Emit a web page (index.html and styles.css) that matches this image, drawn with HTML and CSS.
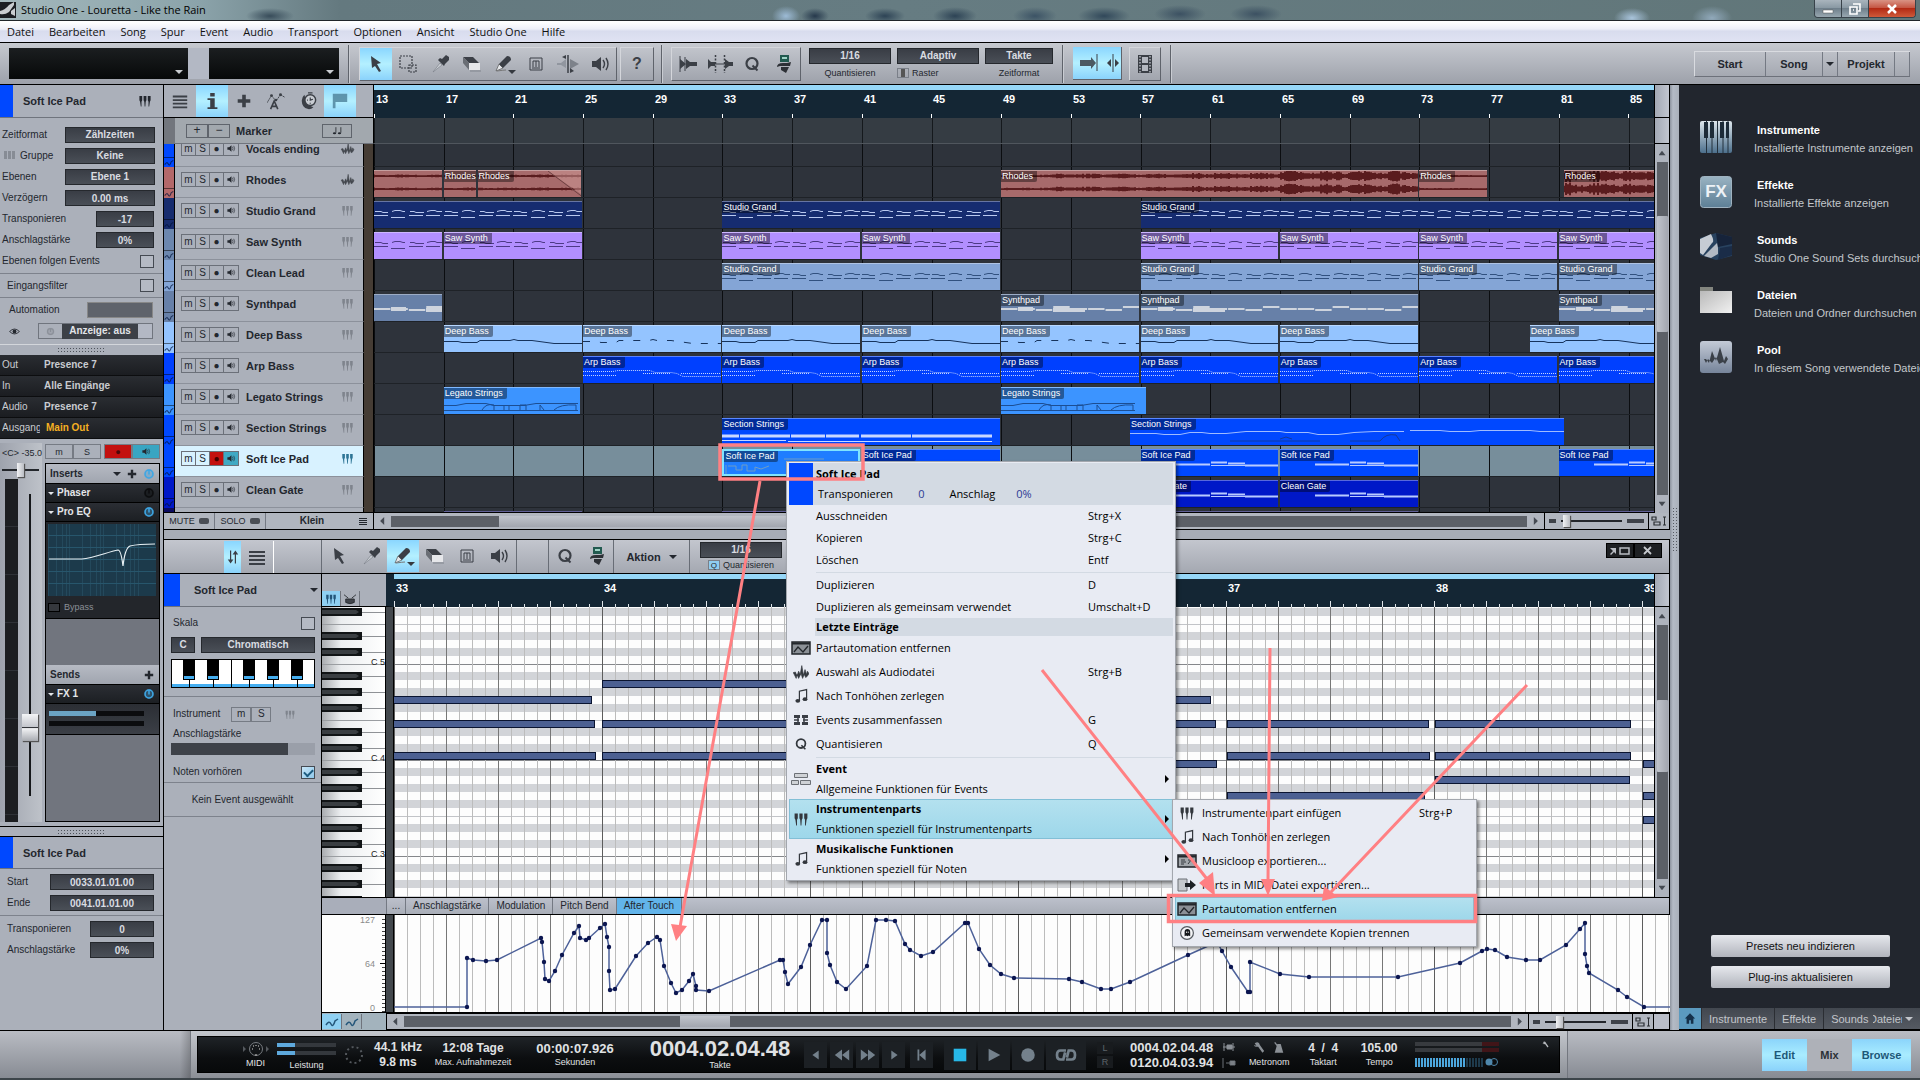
FILE: index.html
```
<!DOCTYPE html>
<html lang="de">
<head>
    <meta charset="UTF-8">
    <meta name="viewport" content="width=device-width, initial-scale=1.0">
    <title>Studio One - Louretta - Like the Rain</title>
    <link rel="stylesheet" href="styles.css">
</head>
<body>
    <!-- Icon library -->
    <svg class="icon-defs" width="0" height="0" aria-hidden="true">
        <symbol id="i-arrow" viewBox="0 0 20 20"><path d="M5 2l1 12 3-2 4 6 2-1-4-7 4-1z" fill="currentColor"/></symbol>
        <symbol id="i-range" viewBox="0 0 20 20"><path d="M2 2h12v12H2zM11 11h7v7h-7z" fill="none" stroke="currentColor" stroke-width="1.2" stroke-dasharray="2 1"/></symbol>
        <symbol id="i-dropper" viewBox="0 0 20 20"><path d="M3 18l7-9 2 2z" fill="#c8ccd2" stroke="#777c84" stroke-width=".6"/><path d="M8 6l6 6 1-2 4-4V3l-3-2-4 4-2-1z" fill="currentColor"/></symbol>
        <symbol id="i-eraser" viewBox="0 0 20 20"><path d="M1 3h10l6 6H7z" fill="#3c4047"/><path d="M7 9h11v7H7z" fill="#e6e7ea"/><path d="M1 3l6 6v7L1 9z" fill="#6a6e75"/><path d="M8 17h11" stroke="#80858d"/></symbol>
        <symbol id="i-pencil" viewBox="0 0 20 20"><path d="M2 17l3-7 4 4z" fill="#e5e7ea" stroke="#555" stroke-width=".7"/><path d="M5 10l8-8q4 0 4 4l-8 8z" fill="currentColor"/><path d="M3 17q7-1 9-1" stroke="#777" fill="none"/></symbol>
        <symbol id="i-mute" viewBox="0 0 20 20"><path d="M4 4h12v12H4z" fill="none" stroke="currentColor"/><path d="M7 13V7h6v6M10 7v6M6 14h8" fill="none" stroke="currentColor"/></symbol>
        <symbol id="i-split" viewBox="0 0 24 20"><path d="M1 9h4l5-4v9L5 11H1z" fill="#91969f"/><path d="M14 5v10l9-5z" fill="#7d828a"/><path d="M12 1v18" stroke="currentColor" stroke-width="1.5"/><path d="M10 1v4L6 3zM14 14v5l4-2z" fill="currentColor"/></symbol>
        <symbol id="i-speaker" viewBox="0 0 20 20"><path d="M2 7h4l5-4v14l-5-4H2z" fill="currentColor"/><path d="M13 6q3 4 0 8M16 4q4 6 0 12" fill="none" stroke="currentColor" stroke-width="1.400"/></symbol>
        <symbol id="i-strip" viewBox="0 0 20 20"><path d="M2 2v16M7 3v14" stroke="currentColor"/><path d="M2 5l6 5-6 5zM8 5l4 3h7v4h-7l-4 3z" fill="currentColor"/></symbol>
        <symbol id="i-bounce" viewBox="0 0 28 20"><path d="M2 5l3 3h4v4H5l-3 3zM19 5v10l4-3h4V8h-4z" fill="currentColor"/><path d="M9 10h10" stroke="currentColor"/><path d="M9.500 1v18M18.500 1v18" stroke="currentColor" stroke-width="1.500" stroke-dasharray="2 1.500"/></symbol>
        <symbol id="i-q" viewBox="0 0 20 20"><circle cx="10" cy="9.500" r="5.500" fill="none" stroke="currentColor" stroke-width="2.200"/><path d="M10.500 11.500l5 5" stroke="currentColor" stroke-width="2"/></symbol>
        <symbol id="i-macro" viewBox="0 0 20 20"><path d="M6 1h9v7H6z" fill="#225a50"/><path d="M8 3h5v2H8z" fill="#9fd3c6"/><path d="M3 13q0-4 6-4h4l4-1-1 4H6zM7 13h8l-3 6-5-3z" fill="#2d3036"/></symbol>
        <symbol id="i-autoscroll" viewBox="0 0 20 20"><path d="M1 7h11V4l5 6-5 6v-3H1z" fill="currentColor" opacity=".85"/><path d="M18 1v17" stroke="currentColor"/></symbol>
        <symbol id="i-center" viewBox="0 0 20 20"><path d="M10 1v18" stroke="currentColor"/><path d="M8 6v8l-4-4zM12 6v8l4-4z" fill="currentColor"/></symbol>
        <symbol id="i-film" viewBox="0 0 20 20"><path d="M3 1h14v18H3z" fill="currentColor"/><path d="M7 3h6v6H7zM7 11h6v6H7z" fill="#b4b8c0"/><path d="M5 2v17M15 2v17" stroke="#b4b8c0" stroke-width="1.500" stroke-dasharray="1.500 1.500"/></symbol>
        <symbol id="i-list" viewBox="0 0 20 20"><path d="M2 5h16M2 9h16M2 13h16M2 17h16" stroke="currentColor" stroke-width="2"/></symbol>
        <symbol id="i-info" viewBox="0 0 20 20"><path d="M8 1h5v4H8zM5 7h8v10h3v2H5v-2h3V9H5z" fill="currentColor"/></symbol>
        <symbol id="i-plus" viewBox="0 0 20 20"><path d="M8 3h4v5h5v4h-5v5H8v-5H3V8h5z" fill="currentColor"/></symbol>
        <symbol id="i-auto" viewBox="0 0 20 20"><path d="M0 12l5-8 5 6 5-7 5 3" fill="none" stroke="currentColor" stroke-dasharray="2 .6"/><path d="M4 19l4-9 4 9M6 16h4" fill="none" stroke="currentColor" stroke-width="1.800"/><circle cx="5" cy="4" r="1.600" fill="currentColor"/><circle cx="10" cy="9" r="1.400" fill="currentColor"/><circle cx="15" cy="3" r="1.600" fill="currentColor"/></symbol>
        <symbol id="i-clock" viewBox="0 0 20 20"><path d="M6 3a7 8 0 1 0 10 14L9 14z" fill="currentColor"/><circle cx="12.500" cy="9" r="6" fill="#c8ccd2" stroke="currentColor" stroke-width="1.600"/><path d="M12.500 6v3l3-1M10 1h5M9 9h1M12.500 12v1" stroke="currentColor" fill="none" stroke-width="1.300"/></symbol>
        <symbol id="i-flag" viewBox="0 0 20 20"><path d="M2 2h16v9H5v7H2z" fill="currentColor" opacity=".8"/></symbol>
        <symbol id="i-keys" viewBox="0 0 20 20"><path d="M2 3h4v6l-1 2v7H4l-1-7-1-2zM8 3h4v6l-1 2-.5 7h-1L9 11 8 9zM14 3h4v6l-1 2-1 7h-1v-7l-1-2z" fill="currentColor"/></symbol>
        <symbol id="i-wave" viewBox="0 0 20 20"><path d="M0 11l3-1 2 5 2-6 2 4 2-11 2 12 2-7 2 6 1-4 2 3-2 3-2 2-2-4-2 5-2-6-3 6-2-5-1 5-3-6z" fill="currentColor" stroke="currentColor" stroke-width=".8"/></symbol>
        <symbol id="i-notes" viewBox="0 0 20 20"><path d="M8 16V4l9-2v11" fill="none" stroke="currentColor" stroke-width="1.500"/><ellipse cx="6" cy="16" rx="3" ry="2.300" fill="currentColor"/><ellipse cx="15" cy="14" rx="3" ry="2.300" fill="currentColor"/></symbol>
        <symbol id="i-quarters" viewBox="0 0 20 20"><path d="M8 4v10M17 4v10" stroke="currentColor" stroke-width="1.500"/><ellipse cx="5.500" cy="15" rx="3" ry="2" fill="currentColor"/><ellipse cx="14.500" cy="15" rx="3" ry="2" fill="currentColor"/></symbol>
        <symbol id="i-power" viewBox="0 0 20 20"><circle cx="10" cy="10" r="8.500" fill="currentColor" opacity=".35"/><circle cx="10" cy="10" r="6.500" fill="none" stroke="currentColor" stroke-width="2.500"/><path d="M10 3v8" stroke="currentColor" stroke-width="2.500"/></symbol>
        <symbol id="i-part" viewBox="0 0 20 14"><path d="M1 1h18v12H1z" fill="#8b9096" stroke="#22262b" stroke-width="1.500"/><path d="M1 2.500h18" stroke="#22262b" stroke-width="2"/><path d="M3 11l4-5 5 5 5-6" fill="none" stroke="#22262b" stroke-width="1.300"/></symbol>
        <symbol id="i-loop" viewBox="0 0 20 14"><path d="M1 1h18v12H1z" fill="#a2a6ab" stroke="#22262b" stroke-width="1.500"/><path d="M1 2.500h18" stroke="#22262b" stroke-width="2"/><path d="M4 6h4M4 8h5M4 10h3M11 10l3-4 3 4M11 6h3" stroke="#33373c" fill="none"/></symbol>
        <symbol id="i-export" viewBox="0 0 20 14"><path d="M1 1h9v12H1z" fill="#c5c8cc" stroke="#6c7076"/><path d="M8 5h5V2l6 5-6 5V9H8z" fill="#1d2024"/></symbol>
        <symbol id="i-ghost" viewBox="0 0 20 20"><circle cx="10" cy="10" r="8" fill="#f4f5f8" stroke="#555a60" stroke-width="1.500"/><path d="M7 14V9q0-4 3.500-4T14 9v5l-2-1-1.500 1L9 13z" fill="#15181c"/><path d="M9 8h1v2H9zM11 8h1v2h-1z" fill="#fff"/></symbol>
        <symbol id="i-merge" viewBox="0 0 20 14"><path d="M3 2h6v3H3zM3 9h6v3H3zM11 2h6v3h-6zM11 9h6v3h-6z" fill="#3a3e45"/><path d="M7 3v8M13 3v8M3 7h5M12 7h5" stroke="#3a3e45" stroke-width="1.500"/></symbol>
        <symbol id="i-blocks" viewBox="0 0 20 14"><path d="M3.500 1.500h13v4h-13zM.5 8.500h7v4h-7zM9.500 8.500h10v4h-10z" fill="#cfd2d6" stroke="#6c7076"/></symbol>
        <symbol id="i-eye" viewBox="0 0 20 12"><path d="M1 6q9-9 18 0-9 9-18 0z" fill="none" stroke="currentColor" stroke-width="1.500"/><circle cx="10" cy="6" r="3.500" fill="currentColor"/></symbol>
        <symbol id="i-swap" viewBox="0 0 16 20"><path d="M5 2v13M11 5v13" stroke="currentColor" stroke-width="1.500"/><path d="M1.500 13h7L5 18zM7.500 7h7L11 2z" fill="currentColor"/></symbol>
        <symbol id="i-zoomfit" viewBox="0 0 16 10"><path d="M1 1h4v3H1zM3 6h6v3H3z" fill="none" stroke="#2a2e33" stroke-width="1.200"/><path d="M13.500 1v8M12 1h3M12 9h3" stroke="#2a2e33"/></symbol>
        <symbol id="i-curve" viewBox="0 0 14 12"><path d="M1 9q3-5 5-1t4-3l3-2" fill="none" stroke="currentColor" stroke-width="1.500"/></symbol>
        <symbol id="i-wrench" viewBox="0 0 14 14"><path d="M2 2q5-3 6 2l5 7-2 2-5-7Q2 7 1 4l3 1z" fill="currentColor"/></symbol>
        <symbol id="i-metro" viewBox="0 0 14 14"><path d="M5 3h4l3 10H2z" fill="currentColor"/><path d="M2 1l7 9" stroke="currentColor" stroke-width="1.500"/></symbol>
        <symbol id="i-home" viewBox="0 0 14 14"><path d="M7 1l6 6h-2v6H8V9H6v4H3V7H1z" fill="currentColor"/></symbol>
    </svg>

    <header class="titlebar">
        <svg class="app-icon" viewBox="0 0 16 16"><path d="M0 0h16v16H0z" fill="#1b1e22"/><path d="M0 9q5-1 9-6l5-3v3L9 10q-4 3-9 2zM11 9l4-3v8l-4-2z" fill="#c9cdd0"/></svg>
        <h1 class="app-title">Studio One - Louretta - Like the Rain</h1>
        <div class="window-buttons">
            <button class="win-btn" aria-label="Minimieren"><svg width="12" height="10"><path d="M1 6h10v3H1z" fill="#fff" stroke="#555" stroke-width=".5"/></svg></button>
            <button class="win-btn" aria-label="Wiederherstellen"><svg width="12" height="12"><path d="M4 1h7v7H9M1 4h7v7H1zM4 7h1" fill="none" stroke="#fff" stroke-width="1.600"/></svg></button>
            <button class="win-btn close" aria-label="Schließen"><svg width="12" height="10"><path d="M2 1l8 8M10 1L2 9" stroke="#fff" stroke-width="2.500"/></svg></button>
        </div>
    </header>

    <nav class="menubar">
        <button>Datei</button><button>Bearbeiten</button><button>Song</button><button>Spur</button><button>Event</button><button>Audio</button><button>Transport</button><button>Optionen</button><button>Ansicht</button><button>Studio One</button><button>Hilfe</button>
    </nav>

    <!-- Main toolbar -->
    <div class="toolbar">
        <div class="param-display wide"></div>
        <div class="param-link"></div>
        <div class="param-display"></div>
        <div class="tool-sep"></div>
        <div class="tool-group">
            <button class="tool on" aria-label="Pfeil"><svg><use href="#i-arrow"/></svg></button>
            <button class="tool" aria-label="Bereich"><svg><use href="#i-range"/></svg></button>
            <button class="tool" aria-label="Teilen"><svg><use href="#i-dropper"/></svg></button>
            <button class="tool" aria-label="Radierer"><svg><use href="#i-eraser"/></svg></button>
            <button class="tool more" aria-label="Stift"><svg><use href="#i-pencil"/></svg></button>
            <button class="tool" aria-label="Stumm"><svg><use href="#i-mute"/></svg></button>
            <button class="tool" aria-label="Biegen"><svg class="w24"><use href="#i-split"/></svg></button>
            <button class="tool" aria-label="Hören"><svg><use href="#i-speaker"/></svg></button>
        </div>
        <div class="tool-group help"><button class="tool">?</button></div>
        <div class="tool-sep"></div>
        <div class="tool-group actions">
            <button class="tool" aria-label="Strip Silence"><svg><use href="#i-strip"/></svg></button>
            <button class="tool" aria-label="Bounce"><svg class="w28"><use href="#i-bounce"/></svg></button>
            <button class="tool" aria-label="Quantisieren"><svg><use href="#i-q"/></svg></button>
            <button class="tool" aria-label="Makro"><svg><use href="#i-macro"/></svg></button>
        </div>
        <div class="tool-field"><select class="field" id="quant"><option>1/16</option></select><label for="quant">Quantisieren</label></div>
        <div class="tool-field left"><select class="field" id="raster"><option>Adaptiv</option></select><label for="raster"><span class="mini-box"></span>Raster</label></div>
        <div class="tool-field narrow"><select class="field" id="zeit"><option>Takte</option></select><label for="zeit">Zeitformat</label></div>
        <div class="tool-sep"></div>
        <div class="scroll-group">
            <button class="tool on" aria-label="Autoscroll"><svg><use href="#i-autoscroll"/></svg></button><button class="tool on slim" aria-label="Zentrieren"><svg><use href="#i-center"/></svg></button>
        </div>
        <div class="tool-group film"><button class="tool" aria-label="Video"><svg><use href="#i-film"/></svg></button></div>
        <div class="tool-sep"></div>
        <div class="page-switch">
            <button class="p-start">Start</button><button class="p-song">Song</button><button class="p-drop" aria-label="Songs"><span class="caret"></span></button><button class="p-proj">Projekt</button><button class="p-end" aria-label="Projekte"></button>
        </div>
    </div>

    <main class="workspace">
        <!-- Inspector -->
        <aside class="inspector">
            <div class="insp-head"><span class="color-chip"></span><h2>Soft Ice Pad</h2><svg class="keys-dark"><use href="#i-keys"/></svg></div>
            <div class="insp-params">
                <div class="param"><label for="p1">Zeitformat</label><select class="field w90" id="p1"><option>Zählzeiten</option></select></div>
                <div class="param"><label for="p2"><span class="bars"></span>Gruppe</label><select class="field w90" id="p2"><option>Keine</option></select></div>
                <div class="param"><label for="p3">Ebenen</label><select class="field w90" id="p3"><option>Ebene 1</option></select></div>
                <div class="param"><label for="p4">Verzögern</label><input class="field w90" id="p4" value="0.00 ms"></div>
                <div class="param"><label for="p5">Transponieren</label><input class="field w58" id="p5" value="-17"></div>
                <div class="param"><label for="p6">Anschlagstärke</label><input class="field w58" id="p6" value="0%"></div>
                <div class="param"><label for="p7">Ebenen folgen Events</label><input type="checkbox" class="check" id="p7"></div>
            </div>
            <div class="insp-filter param"><label for="p8">Eingangsfilter</label><input type="checkbox" class="check" id="p8"></div>
            <div class="insp-auto">
                <div class="auto-row"><label for="p9">Automation</label><input class="field dim" id="p9" value=""></div>
                <div class="auto-row"><svg class="eye"><use href="#i-eye"/></svg><div class="auto-show"><svg class="pw"><use href="#i-power"/></svg><button>Anzeige: aus</button><span></span></div></div>
            </div>
            <div class="grip"></div>
            <dl class="routing">
                <div><dt>Out</dt><dd>Presence 7</dd></div>
                <div><dt>In</dt><dd>Alle Eingänge</dd></div>
                <div><dt>Audio</dt><dd>Presence 7</dd></div>
                <div><dt>Ausgang</dt><dd class="main-out">Main Out</dd></div>
            </dl>
            <div class="channel">
                <div class="strip">
                    <div class="strip-values"><span>&lt;C&gt;</span><span>-35.0</span></div>
                    <input type="range" class="pan" value="50" aria-label="Panorama">
                    <div class="fader-row"><div class="meter"></div><input type="range" class="fader" value="20" aria-label="Lautstärke"></div>
                </div>
                <div class="rack-col">
                    <div class="ch-buttons"><button>m</button><button>S</button><button class="rec" aria-label="Aufnahme">●</button><button class="mon" aria-label="Monitor"><svg><use href="#i-speaker"/></svg></button></div>
                    <div class="rack">
                        <div class="rack-head"><b>Inserts</b><span class="caret"></span><svg><use href="#i-plus"/></svg><svg class="pw-on"><use href="#i-power"/></svg></div>
                        <div class="rack-item"><span class="caret"></span><b>Phaser</b><svg class="pw-off"><use href="#i-power"/></svg></div>
                        <div class="rack-item"><span class="caret"></span><b>Pro EQ</b><svg class="pw-on"><use href="#i-power"/></svg></div>
                        <div class="eq">
                            <svg viewBox="0 0 108 72" class="eq-graph" id="eqGraph"></svg>
                            <div class="bypass"><i></i>Bypass</div>
                        </div>
                        <div class="rack-gap"></div>
                        <div class="rack-head"><b>Sends</b><svg><use href="#i-plus"/></svg></div>
                        <div class="rack-item"><span class="caret"></span><b>FX 1</b><svg class="pw-on"><use href="#i-power"/></svg></div>
                        <div class="send-bars"><span class="half"></span><span></span></div>
                    </div>
                </div>
            </div>
            <div class="grip lined"></div>
            <div class="insp-head small"><span class="color-chip"></span><h2>Soft Ice Pad</h2></div>
            <div class="event-params">
                <div class="param"><label for="e1">Start</label><input class="field w104" id="e1" value="0033.01.01.00"></div>
                <div class="param"><label for="e2">Ende</label><input class="field w104" id="e2" value="0041.01.01.00"></div>
            </div>
            <div class="event-params">
                <div class="param"><label for="e3">Transponieren</label><input class="field w64" id="e3" value="0"></div>
                <div class="param"><label for="e4">Anschlagstärke</label><input class="field w64" id="e4" value="0%"></div>
            </div>
        </aside>

        <section class="center">
            <!-- Arrangement -->
            <div class="arrange">
                <div class="track-tools">
                    <button class="tool" aria-label="Spurliste"><svg><use href="#i-list"/></svg></button>
                    <button class="tool on" aria-label="Inspektor"><svg><use href="#i-info"/></svg></button>
                    <button class="tool" aria-label="Spur hinzufügen"><svg><use href="#i-plus"/></svg></button>
                    <button class="tool" aria-label="Automation"><svg><use href="#i-auto"/></svg></button>
                    <button class="tool" aria-label="Tempo"><svg><use href="#i-clock"/></svg></button>
                    <button class="tool on flag" aria-label="Marker"><svg><use href="#i-flag"/></svg></button>
                </div>
                <svg class="ruler" id="songRuler"></svg>
                <div class="corner"></div>
                <div class="marker-head"><i></i><button>+</button><button>−</button><b>Marker</b><button class="note-btn" aria-label="Notenwert"><svg><use href="#i-quarters"/></svg></button></div>
                <div class="marker-lane"></div>
                <div class="corner"></div>
                <div class="track-list"><div class="scrolled" id="trackList"></div></div>
                <div class="lanes"><div class="scrolled" id="lanes"></div></div>
                <div class="vscroll"><i class="up"></i><span class="vtrack"><span class="vthumb mid"></span></span><i class="down"></i></div>
                <div class="track-foot"><span class="led">MUTE<i></i></span><span class="led">SOLO<i></i></span><b>Klein</b><svg><use href="#i-list"/></svg></div>
                <div class="hscroll"><i class="prev"></i><span class="htrack"><span class="hthumb song"></span></span><i class="next"></i><span class="zoom"><em></em><input type="range" value="4" aria-label="Zoom"><em class="big"></em></span><svg class="fit"><use href="#i-zoomfit"/></svg></div>
            </div>

            <div class="divider"></div>

            <!-- Editor toolbar -->
            <div class="editor-tools">
                <div class="et-left"><button class="tool on swap" aria-label="Sync"><svg><use href="#i-swap"/></svg></button><button class="tool" aria-label="Liste"><svg><use href="#i-list"/></svg></button></div>
                <div class="et-blank"></div>
                <div class="et-group edit-set">
                    <button class="tool" aria-label="Pfeil"><svg><use href="#i-arrow"/></svg></button>
                    <button class="tool" aria-label="Teilen"><svg><use href="#i-dropper"/></svg></button>
                    <button class="tool on more" aria-label="Stift"><svg><use href="#i-pencil"/></svg></button>
                    <button class="tool" aria-label="Radierer"><svg><use href="#i-eraser"/></svg></button>
                    <button class="tool" aria-label="Stumm"><svg><use href="#i-mute"/></svg></button>
                    <button class="tool" aria-label="Hören"><svg><use href="#i-speaker"/></svg></button>
                </div>
                <div class="et-blank short"></div>
                <div class="et-group"><button class="tool" aria-label="Quantisieren"><svg><use href="#i-q"/></svg></button><button class="tool" aria-label="Makro"><svg><use href="#i-macro"/></svg></button></div>
                <button class="aktion">Aktion<span class="caret"></span></button>
                <div class="tool-field"><select class="field" id="equant"><option>1/16</option></select><label for="equant"><span class="mini-box q">Q</span>Quantisieren</label></div>
                <div class="pane-buttons"><button aria-label="Abdocken"><svg width="24" height="12"><path d="M2 3h6v6L6 7l-3 3-1-1 3-3z" fill="#b9bcc2"/><path d="M12 3h9v6h-9z" fill="none" stroke="#b9bcc2" stroke-width="1.500"/></svg></button><button aria-label="Schließen"><svg width="12" height="12"><path d="M2 2l7 7M9 2L2 9" stroke="#c5c8cd" stroke-width="1.800"/></svg></button></div>
            </div>

            <!-- Piano editor -->
            <div class="editor">
                <div class="ed-panel">
                    <div class="insp-head ed-head"><span class="color-chip"></span><h2>Soft Ice Pad</h2><span class="caret"></span></div>
                    <div class="scale-box">
                        <div class="param"><label for="s1">Skala</label><input type="checkbox" class="check" id="s1"></div>
                        <div class="scale-row"><select class="field root" aria-label="Grundton"><option>C</option></select><select class="field kind" aria-label="Skala"><option>Chromatisch</option></select></div>
                        <svg class="scale-keys" id="scaleKeys" viewBox="0 0 144 29"></svg>
                    </div>
                    <div class="instr-box">
                        <div class="instr-row">Instrument<span class="ms"><button>m</button><button>S</button></span><svg><use href="#i-keys"/></svg></div>
                        <label for="vel">Anschlagstärke</label>
                        <input type="range" class="velocity" id="vel" value="81">
                        <div class="param"><label for="s2">Noten vorhören</label><input type="checkbox" class="check" id="s2" checked></div>
                    </div>
                    <p class="no-event">Kein Event ausgewählt</p>
                </div>
                <div class="key-col">
                    <div class="key-tabs"><button class="on" aria-label="Klavier"><svg><use href="#i-keys"/></svg></button><button aria-label="Drums"><svg viewBox="0 0 16 14"><path d="M3 7h10v4q-5 3-10 0zM1 2l5 4M15 2l-5 4" stroke="#26292e" fill="#41454c"/></svg></button></div>
                    <svg class="keyboard" id="keyboard"></svg>
                    <div class="key-foot"></div>
                    <svg class="auto-scale" id="autoScale"></svg>
                    <div class="curve-tabs"><button class="on" aria-label="Kurve"><svg><use href="#i-curve"/></svg></button><button aria-label="Kurve 2"><svg><use href="#i-curve"/></svg></button></div>
                </div>
                <div class="ed-main">
                    <div class="ed-scrollarea">
                        <div class="ed-canvas"><svg class="ed-ruler" id="edRuler"></svg><svg class="roll" id="roll"></svg></div>
                        <div class="ed-vscroll"><div class="corner"></div><div class="vscroll"><i class="up"></i><span class="vtrack"><span class="vthumb low"></span></span><i class="down"></i></div></div>
                    </div>
                    <div class="lane-tabs"><button class="dots">...</button><button>Anschlagstärke</button><button>Modulation</button><button>Pitch Bend</button><button class="on">After Touch</button></div>
                    <svg class="auto-lane" id="autoLane"></svg>
                    <div class="hscroll"><i class="prev"></i><span class="htrack"><span class="hthumb edit"></span></span><i class="next"></i><span class="zoom"><em></em><input type="range" value="20" aria-label="Zoom"><em class="big"></em></span><svg class="fit"><use href="#i-zoomfit"/></svg><span class="end"></span></div>
                </div>
            </div>
        </section>

        <div class="splitter"><i></i></div>

        <!-- Browser -->
        <aside class="browser">
            <ul class="places">
                <li><svg viewBox="0 0 32 32"><defs><linearGradient id="g1" x2="0" y2="1"><stop stop-color="#dde6ec"/><stop offset="1" stop-color="#4c6f8c"/></linearGradient></defs><rect width="32" height="32" rx="2" fill="url(#g1)"/><path d="M6.500 0v32M12 0v32M17.500 0v32M23 0v32M28 0v32" stroke="#22303c"/><path d="M4 1h4v16H4zM10 1h4v16h-4zM20 1h4v16h-4zM26 1h3v16h-3z" fill="#1d2b38"/></svg><div><h3>Instrumente</h3><p>Installierte Instrumente anzeigen</p></div></li>
                <li><svg viewBox="0 0 32 32"><defs><linearGradient id="g2" x2="0" y2="1"><stop stop-color="#9ab3c2"/><stop offset="1" stop-color="#5d7f96"/></linearGradient></defs><rect x=".5" y=".5" width="31" height="31" rx="3" fill="url(#g2)" stroke="#9fb2c0"/><text x="16" y="21" class="fx">FX</text></svg><div><h3>Effekte</h3><p>Installierte Effekte anzeigen</p></div></li>
                <li><svg viewBox="0 0 32 32"><path d="M0 7l16-5 16 4v19l-16 4L0 24z" fill="#28425f"/><path d="M16 2l16 4v7L18 16z" fill="#16233a"/><path d="M0 8l11-5q4 8 1 9L3 24l-3-2z" fill="#c6ccd4"/><path d="M4 25l13-13 1 5v6l-7 4z" fill="#b3bac4"/><path d="M20 17l12-2v9l-14 5z" fill="#1a2c48"/></svg><div><h3>Sounds</h3><p>Studio One Sound Sets durchsuchen</p></div></li>
                <li><svg viewBox="0 0 32 32"><defs><linearGradient id="g3" x2="1" y2="1"><stop stop-color="#b9b9b9"/><stop offset="1" stop-color="#f1f1f1"/></linearGradient></defs><path d="M0 1h13v6H0z" fill="#83857f"/><path d="M0 5h32v22H0z" fill="url(#g3)"/></svg><div><h3>Dateien</h3><p>Dateien und Ordner durchsuchen</p></div></li>
                <li><svg viewBox="0 0 32 32"><defs><linearGradient id="g4" x2="0" y2="1"><stop stop-color="#c3cad6"/><stop offset="1" stop-color="#76849a"/></linearGradient></defs><rect width="32" height="32" rx="3" fill="url(#g4)"/><path d="M4 18h2l3 4 3-12 4 10 4-14 4 14 2-5 2 3-3 5-2-2-4 2-3-7-4 6-4-4-2 4z" fill="#3a4048"/></svg><div><h3>Pool</h3><p>In diesem Song verwendete Dateien</p></div></li>
            </ul>
            <div class="browser-actions"><button>Presets neu indizieren</button><button>Plug-ins aktualisieren</button></div>
            <div class="browser-tabs"><button class="home" aria-label="Start"><svg><use href="#i-home"/></svg></button><button>Instrumente</button><button>Effekte</button><button class="t-s">Sounds</button><button class="clip-tab"><span>Dateien</span></button><span class="caret"></span></div>
        </aside>
    </main>

    <!-- Transport -->
    <footer class="transport">
        <div class="tr-left"></div>
        <div class="tr-frame">
            <div class="tr-panel">
                <div class="cell midi"><svg viewBox="0 0 28 16"><circle cx="14" cy="8" r="6.500" fill="none" stroke="#777b80"/><path d="M1 5v6l3-3zM24 5v6l3-3z" fill="#55595e"/><path d="M10 8h1M17 8h1M14 4v1M11 5h1M16 5h1M13 14h2" stroke="#999" stroke-width="1.500"/></svg><small>MIDI</small></div>
                <div class="cell perf"><span class="load a"></span><span class="load b"></span><small>Leistung</small></div>
                <svg class="spin" viewBox="0 0 20 20"><circle cx="10" cy="10" r="8" fill="none" stroke="#54585d" stroke-width="2" stroke-dasharray="2 3"/></svg>
                <div class="cell c-rate"><b>44.1 kHz</b><b>9.8 ms</b></div>
                <div class="cell c-rec"><b>12:08 Tage</b><small>Max. Aufnahmezeit</small></div>
                <div class="cell c-sec"><b class="t13">00:00:07.926</b><small>Sekunden</small></div>
                <div class="cell c-pos"><b class="t22">0004.02.04.48</b><small>Takte</small></div>
                <div class="tr-btns small">
                    <button aria-label="Zurück"><svg viewBox="0 0 20 20"><path d="M13 5v10l-7-5z"/></svg></button>
                    <button aria-label="Rückwärts"><svg viewBox="0 0 20 20"><path d="M10 4v12l-8-6zM18 4v12l-8-6z"/></svg></button>
                    <button aria-label="Vorwärts"><svg viewBox="0 0 20 20"><path d="M2 4v12l8-6zM10 4v12l8-6z"/></svg></button>
                    <button aria-label="Weiter"><svg viewBox="0 0 20 20"><path d="M7 5v10l7-5z"/></svg></button>
                    <button class="rtz" aria-label="Anfang"><svg viewBox="0 0 20 20"><path d="M5 4h2v12H5zM14 4v12l-7-6z"/></svg></button>
                </div>
                <div class="tr-btns">
                    <button class="stop" aria-label="Stopp"><svg viewBox="0 0 20 20"><path d="M3 3h14v14H3z"/></svg></button>
                    <button aria-label="Wiedergabe"><svg viewBox="0 0 20 20"><path d="M4 3v14l13-7z"/></svg></button>
                    <button aria-label="Aufnahme"><svg viewBox="0 0 20 20"><circle cx="10" cy="10" r="7.500"/></svg></button>
                    <button class="loop-btn" aria-label="Loop"><svg viewBox="0 0 24 20" class="loop"><path d="M12 5H6q-4 0-4 5t4 5h3l2-8M12 15h6q4 0 4-5t-4-5h-3l-2 8"/></svg></button>
                </div>
                <div class="lr"><span>L</span><span>R</span></div>
                <div class="cell c-loop"><b class="t13">0004.02.04.48</b><b class="t13">0120.04.03.94</b></div>
                <div class="cell c-pre"><svg viewBox="0 0 14 12"><path d="M1 6h12M2 2v8M11 2v8M5 4h5v4H5z" stroke="#8b9096" fill="#8b9096"/></svg><svg viewBox="0 0 14 12"><path d="M1 1v10M4 6h9M8 4h5v4H8z" stroke="#6b7076" fill="#8b9096"/></svg></div>
                <div class="cell c-metro"><span><svg><use href="#i-wrench"/></svg><svg><use href="#i-metro"/></svg></span><small>Metronom</small></div>
                <div class="cell c-sig"><b>4 &nbsp;/ &nbsp;4</b><small>Taktart</small></div>
                <div class="cell c-tempo"><b>105.00</b><small>Tempo</small></div>
                <div class="cell c-level"><i></i><i></i><u></u></div>
                <svg class="stereo" viewBox="0 0 14 10"><circle cx="4" cy="5" r="3.500" fill="#4f87ab"/><circle cx="9" cy="5" r="3.500" fill="none" stroke="#4f87ab"/></svg>
                <svg class="tr-wrench"><use href="#i-wrench"/></svg>
            </div>
        </div>
        <div class="tr-right"><div class="views"><button class="on v-edit">Edit</button><button class="v-mix">Mix</button><button class="on v-browse">Browse</button></div></div>
    </footer>

    <!-- Context menu -->
    <div class="context-menu" role="menu">
        <div class="cm-head"><span class="cm-chip"></span><div><b>Soft Ice Pad</b><p>Transponieren<em>0</em>Anschlag<em>0%</em></p></div></div>
        <button role="menuitem">Ausschneiden<kbd>Strg+X</kbd></button>
        <button role="menuitem">Kopieren<kbd>Strg+C</kbd></button>
        <button role="menuitem">Löschen<kbd>Entf</kbd></button>
        <hr>
        <button role="menuitem">Duplizieren<kbd>D</kbd></button>
        <button role="menuitem">Duplizieren als gemeinsam verwendet<kbd>Umschalt+D</kbd></button>
        <h4>Letzte Einträge</h4>
        <button role="menuitem" class="tall"><svg class="wide"><use href="#i-part"/></svg>Partautomation entfernen</button>
        <button role="menuitem" class="tall"><svg><use href="#i-wave"/></svg>Auswahl als Audiodatei<kbd>Strg+B</kbd></button>
        <button role="menuitem" class="tall"><svg><use href="#i-notes"/></svg>Nach Tonhöhen zerlegen</button>
        <button role="menuitem" class="tall"><svg class="wide"><use href="#i-merge"/></svg>Events zusammenfassen<kbd>G</kbd></button>
        <button role="menuitem" class="tall"><svg><use href="#i-q"/></svg>Quantisieren<kbd>Q</kbd></button>
        <hr>
        <button role="menuitem" class="group"><svg class="wide"><use href="#i-blocks"/></svg><span><b>Event</b>Allgemeine Funktionen für Events</span></button>
        <button role="menuitem" class="group hot"><svg><use href="#i-keys"/></svg><span><b>Instrumentenparts</b>Funktionen speziell für Instrumentenparts</span></button>
        <button role="menuitem" class="group"><svg><use href="#i-notes"/></svg><span><b>Musikalische Funktionen</b>Funktionen speziell für Noten</span></button>
    </div>
    <div class="context-menu sub" role="menu">
        <button role="menuitem" class="tall"><svg><use href="#i-keys"/></svg>Instrumentenpart einfügen<kbd>Strg+P</kbd></button>
        <button role="menuitem" class="tall"><svg><use href="#i-notes"/></svg>Nach Tonhöhen zerlegen</button>
        <button role="menuitem" class="tall"><svg class="wide"><use href="#i-loop"/></svg>Musicloop exportieren...</button>
        <button role="menuitem" class="tall"><svg class="wide"><use href="#i-export"/></svg>Parts in MIDI-Datei exportieren...</button>
        <button role="menuitem" class="tall hot"><svg class="wide"><use href="#i-part"/></svg>Partautomation entfernen</button>
        <button role="menuitem" class="tall"><svg><use href="#i-ghost"/></svg>Gemeinsam verwendete Kopien trennen</button>
    </div>

    <!-- Tutorial marks -->
    <svg class="marks" width="1920" height="1080">
        <g fill="none" stroke="#ff8083" stroke-width="3.500">
            <path d="M720 445h143v34H720zM1168.500 895.500h307v26h-307z"/>
            <path d="M760 481l-80 446M1042 670l165 209M1270 648l-2 234M1527 685l-196 207" stroke-width="3"/>
        </g>
        <path d="M671 924l16 2-11 15zM1199 883l14-11 2 24zM1261 879h14l-7 17zM1324 886l14 11-16 4z" fill="#ff8083"/>
    </svg>

    <script src="script.js"></script>
</body>
</html>
```
FILE: styles.css
```
* {
    box-sizing: border-box;
}

body {
    margin: 0;
    height: 100vh;
    display: flex;
    flex-direction: column;
    overflow: hidden;
    position: relative;
    font-family: "Liberation Sans", Arial, sans-serif;
    font-size: 10px;
    line-height: 12px;
    color: #23272e;
    background: #abb0ba;
}

h1, h2, h3, h4, p, ul, dl, dd {
    margin: 0;
    padding: 0;
    font-size: inherit;
}

button, input, select {
    font: inherit;
    color: inherit;
    margin: 0;
    padding: 0;
    border: 0;
    border-radius: 0;
    background: none;
    appearance: none;
}

svg {
    display: block;
    flex: none;
}

.icon-defs {
    position: absolute;
}

/* Title bar and menu */
.titlebar {
    height: 21px;
    flex: none;
    display: flex;
    align-items: center;
    border-bottom: 1px solid #20262a;
    background:
        radial-gradient(ellipse 14px 10px at 786px 16px, #9dbbd6, transparent),
        radial-gradient(ellipse 14px 8px at 815px 16px, #26394c, transparent),
        radial-gradient(ellipse 20px 8px at 885px 16px, #2d4355, transparent),
        radial-gradient(ellipse 22px 9px at 955px 16px, #2d4355, transparent),
        radial-gradient(ellipse 22px 9px at 1035px 16px, #3c5365, transparent),
        radial-gradient(ellipse 26px 9px at 1104px 16px, #31485a, transparent),
        radial-gradient(ellipse 26px 9px at 1180px 14px, #3c5162, transparent),
        radial-gradient(ellipse 26px 9px at 1256px 14px, #3c5162, transparent),
        radial-gradient(ellipse 18px 10px at 1632px 18px, #a9c4dc, transparent),
        radial-gradient(ellipse 20px 12px at 1712px 18px, #91a9bb, transparent),
        radial-gradient(ellipse 24px 8px at 270px 16px, #384c5a, transparent),
        linear-gradient(90deg, #a3b8bc, #8ba3aa 200px, #64797f 340px, #667c82 900px, #617679);
}

.app-icon {
    width: 16px;
    height: 16px;
}

.app-title {
    flex: 1;
    padding-left: 5px;
    font-family: "Open Sans", "Noto Sans", sans-serif;
    font-size: 11px;
    font-weight: normal;
    color: #000;
}

.window-buttons {
    display: flex;
    align-self: flex-start;
    margin-right: 4px;
    border: 1px solid #38424a;
    border-top: 0;
    border-radius: 0 0 4px 4px;
    overflow: hidden;
}

.win-btn {
    width: 27px;
    height: 17px;
    display: flex;
    align-items: center;
    justify-content: center;
    background: linear-gradient(#a9b4bd, #8696a1 50%, #6f7f8b 50%, #98a7b0);
    border-right: 1px solid #38424a;
}

.win-btn.close {
    width: 46px;
    border: 0;
    background: linear-gradient(#d99384, #c55744 45%, #b32a14 50%, #cf5a3a);
}

.menubar {
    height: 22px;
    flex: none;
    display: flex;
    padding-left: 7px;
    gap: 15px;
    font-family: "Open Sans", "Noto Sans", sans-serif;
    font-size: 11px;
    color: #111;
    background: linear-gradient(#fff, #eef0f9 35%, #d8dcee 45%, #e0e3f3);
    border-top: 1px solid #fff;
    border-bottom: 1px solid #000;
}

/* Main toolbar */
.toolbar {
    height: 42px;
    flex: none;
    display: flex;
    align-items: center;
    background: linear-gradient(#c6c9d0, #9da1aa);
    border-bottom: 1px solid #000;
    padding-left: 9px;
}

.param-display {
    width: 130px;
    height: 31px;
    background: linear-gradient(#1b1e20, #070909);
    display: flex;
    justify-content: flex-end;
    align-items: flex-end;
    padding: 5px;
}

.param-display::after,
.caret {
    content: "";
    border: 4px solid transparent;
    border-top-color: currentColor;
    border-bottom: 0;
}

.param-display::after {
    color: #c9ccd0;
}

.param-display.wide {
    width: 179px;
}

.param-link {
    width: 21px;
    height: 31px;
    background: #b3b8c4;
}

.tool-sep {
    width: 2px;
    height: 38px;
    margin: 0 9px;
    border-left: 1px solid #5f636b;
    border-right: 1px solid #c9ccd2;
}

.tool-group {
    display: flex;
    border: 1px solid #d4d6db;
    border-right-color: #5f636b;
    border-bottom-color: #5f636b;
}

.tool {
    width: 32px;
    height: 32px;
    display: flex;
    align-items: center;
    justify-content: center;
    color: #3b3f46;
    font-size: 16px;
    font-weight: bold;
    position: relative;
}

.tool svg {
    width: 20px;
    height: 20px;
}

.tool svg.w24 {
    width: 24px;
}

.tool svg.w28 {
    width: 28px;
}

.tool.on {
    background: linear-gradient(#8ad6ff, #b4f0ff 50%, #8ad2fb);
}

.tool.more::after {
    content: "";
    position: absolute;
    right: 4px;
    bottom: 6px;
    border: 4px solid transparent;
    border-top-color: #35393f;
    border-bottom: 0;
}

.tool-group.help {
    margin-left: 3px;
    margin-right: -2px;
}

.tool-group.actions {
    margin-right: 8px;
    margin-left: -1px;
}

.tool-field {
    width: 82px;
    margin-right: 6px;
    display: flex;
    flex-direction: column;
    align-items: center;
    gap: 3px;
    font-size: 9px;
}

.tool-field label {
    display: flex;
    align-items: center;
    gap: 3px;
}

.tool-field.left {
    align-items: flex-start;
}

.tool-field.narrow {
    width: 68px;
    margin-right: 0;
}

.field {
    width: 100%;
    height: 16px;
    background: linear-gradient(#393d45, #4a4f57);
    border: 1px solid #25282d;
    color: #d9dce1;
    font-size: 10px;
    font-weight: bold;
    text-align: center;
    text-align-last: center;
}

.mini-box {
    width: 12px;
    height: 10px;
    border: 1px solid #7a7f88;
    background: linear-gradient(90deg, transparent 3px, #555 3px 7px, transparent 7px);
}

.mini-box.q {
    background: #8fcdf0;
    font-size: 8px;
    line-height: 9px;
    text-align: center;
}

.scroll-group {
    display: flex;
    border-right: 1px solid #5f636b;
    border-bottom: 1px solid #5f636b;
}

.tool.slim {
    width: 16px;
}

.tool-group.film {
    margin-left: 7px;
}

.film .tool {
    width: 30px;
}

.page-switch {
    display: flex;
    margin-left: auto;
    margin-right: 10px;
    font-size: 11px;
    font-weight: bold;
    border-top: 1px solid #d9dbe0;
    border-left: 1px solid #d9dbe0;
    border-bottom: 1px solid #6d717a;
}

.page-switch button {
    height: 24px;
    border-right: 1px solid #747983;
    display: flex;
    align-items: center;
    justify-content: center;
    font-weight: bold;
}

.p-start {
    width: 71px;
}

.p-song, .p-proj {
    width: 57px;
}

.p-drop, .p-end {
    width: 15px;
}

/* Workspace */
.workspace {
    flex: 1;
    display: flex;
    min-height: 0;
}

.inspector {
    width: 164px;
    flex: none;
    display: flex;
    flex-direction: column;
    border-right: 1px solid #000;
    background: #abb0ba;
}

.insp-head {
    height: 33px;
    flex: none;
    display: flex;
    align-items: center;
    border-bottom: 1px solid #6f747d;
    padding-right: 10px;
}

.insp-head.small {
    height: 32px;
}

.color-chip {
    width: 13px;
    height: 100%;
    margin-right: 10px;
    background: #0048ff;
}

.insp-head h2 {
    flex: 1;
    font-size: 11px;
}

.keys-dark {
    width: 16px;
    height: 14px;
}

.insp-params {
    padding: 9px 9px 4px 2px;
    display: flex;
    flex-direction: column;
    gap: 5px;
}

.insp-params .w90 {
    margin-right: -1px;
}

.param {
    display: flex;
    align-items: center;
    justify-content: space-between;
    min-height: 16px;
}

.param .w90 {
    width: 90px;
}

.param .w58 {
    width: 58px;
}

.param .w64 {
    width: 64px;
}

.param .w104 {
    width: 104px;
}

.bars {
    display: inline-block;
    width: 12px;
    height: 8px;
    margin: 0 4px 0 2px;
    background: repeating-linear-gradient(90deg, #878c95 0 3px, transparent 3px 4px);
}

.check {
    width: 14px;
    height: 13px;
    border: 1px solid #454a52;
    background: #b5bac4;
}

.check:checked {
    background: linear-gradient(135deg, #c8e6f8, #8fc8ea);
    display: flex;
    align-items: center;
    justify-content: center;
}

.check:checked::after {
    content: "";
    width: 7px;
    height: 4px;
    border-left: 2px solid #1d5c80;
    border-bottom: 2px solid #1d5c80;
    transform: rotate(-45deg);
}

.insp-filter {
    height: 25px;
    padding: 0 9px 0 7px;
    border-top: 1px solid #7d828c;
    border-bottom: 1px solid #7d828c;
}

.insp-auto {
    padding: 4px 10px 5px 9px;
    display: flex;
    flex-direction: column;
    gap: 5px;
}

.auto-row {
    height: 16px;
    display: flex;
    align-items: center;
    justify-content: space-between;
}

.field.dim {
    width: 66px;
    background: #5f636b;
    border-color: #888;
}

.eye {
    width: 11px;
    height: 7px;
}

.auto-show {
    width: 115px;
    height: 16px;
    display: flex;
    align-items: center;
    border: 1px solid #70757e;
}

.auto-show .pw {
    width: 23px;
    height: 9px;
    color: #8b9099;
}

.auto-show button {
    width: 76px;
    height: 15px;
    background: #3c4047;
    color: #e2e4e8;
    font-weight: bold;
}

.auto-show span {
    flex: 1;
    height: 14px;
    background: #b3b8c4;
}

.grip {
    height: 11px;
    flex: none;
    border-top: 1px solid #d3d6db;
    background: radial-gradient(circle, #4e535b 0.8px, transparent 1px) 0 0 / 3px 3px content-box;
    padding: 2px 57px;
}

.grip.lined {
    border-top: 1px solid #000;
    border-bottom: 1px solid #000;
}

.routing div {
    height: 21px;
    display: flex;
    align-items: center;
    padding-left: 2px;
    color: #c9ccd1;
    background: linear-gradient(#2a2d32, #1b1d21);
    border-bottom: 1px solid #0c0d0f;
}

.routing dt {
    width: 38px;
    margin-right: 4px;
    overflow: hidden;
}

.routing dd {
    font-weight: bold;
}

.routing .main-out {
    color: #f5b022;
    padding-left: 2px;
}

.channel {
    flex: none;
    height: 387px;
    display: flex;
    padding: 4px 3px 4px 0;
}

.strip {
    width: 42px;
    display: flex;
    flex-direction: column;
    background: linear-gradient(90deg, #9ea3ad, #bec2c9);
}

.strip-values {
    height: 20px;
    display: flex;
    justify-content: space-between;
    align-items: center;
    padding-left: 2px;
    font-size: 9px;
}

input[type="range"] {
    appearance: none;
    background: linear-gradient(#23262b, #23262b) center / 100% 2px no-repeat;
}

input[type="range"]::-webkit-slider-thumb {
    appearance: none;
    width: 7px;
    height: 14px;
    background: linear-gradient(90deg, #f2f3f5, #b9bcc2);
    box-shadow: 1px 1px 1px #555;
}

.pan {
    width: 37px;
    height: 14px;
    margin: 0 2px 2px;
}

.fader-row {
    flex: 1;
    display: flex;
    padding-left: 5px;
    gap: 4px;
    min-height: 0;
}

.meter {
    width: 13px;
    background: repeating-linear-gradient(#1c1e21 0 47px, #2e3136 47px 48px);
}

input.fader {
    width: 16px;
    height: 302px;
    margin-top: 15px;
    writing-mode: vertical-lr;
    direction: rtl;
    background: linear-gradient(#15171a, #15171a) center / 2px 100% no-repeat;
}

input.fader::-webkit-slider-thumb {
    width: 16px;
    height: 27px;
    background: linear-gradient(#f3f4f6, #c3c6cc 48%, #33363b 50%, #f1f2f4 54%, #a8abb1);
}

.rack-col {
    flex: 1;
    display: flex;
    flex-direction: column;
    margin-left: 3px;
}

.ch-buttons {
    height: 16px;
    display: flex;
    margin-bottom: 4px;
    padding-top: 1px;
}

.ch-buttons button {
    width: 28px;
    border: 1px solid #767b84;
    font-size: 9px;
    line-height: 12px;
    display: flex;
    align-items: center;
    justify-content: center;
}

.ch-buttons svg {
    width: 10px;
    height: 9px;
}

.ch-buttons .rec {
    margin-left: 3px;
    background: #c3100f;
    color: #4c0a0a;
}

.ch-buttons .mon {
    background: #39a5c2;
}

.rack {
    flex: 1;
    border: 1px solid #000;
    background: #71757e;
}

.rack-head {
    height: 20px;
    display: flex;
    align-items: center;
    gap: 5px;
    padding: 0 4px;
    background: linear-gradient(#b6bac3, #a0a5af);
    border-bottom: 1px solid #000;
}

.rack-head b {
    flex: 1;
}

.rack-head svg,
.rack-item svg {
    width: 12px;
    height: 12px;
}

.rack-item {
    height: 19px;
    display: flex;
    align-items: center;
    gap: 3px;
    padding: 0 4px 0 2px;
    background: linear-gradient(#2b2e34, #1c1f23);
    border-bottom: 1px solid #000;
    color: #e4e6e9;
}

.rack-item b {
    flex: 1;
}

.rack-item .caret {
    border-width: 3px;
    border-bottom: 0;
}

.pw-on {
    color: #3ea6e4;
}

.pw-off {
    color: #0c0d0f;
}

.eq {
    height: 97px;
    padding: 2px;
    background: #23262b;
    border-bottom: 1px solid #000;
}

.eq-graph {
    width: 108px;
    height: 72px;
    background: #1c3a4b;
}

.bypass {
    display: flex;
    align-items: center;
    gap: 4px;
    padding-top: 5px;
    font-size: 9px;
    color: #8b9097;
}

.bypass i {
    width: 12px;
    height: 9px;
    background: #35383d;
    border: 1px solid #000;
}

.rack-gap {
    height: 46px;
}

.send-bars {
    height: 31px;
    display: flex;
    flex-direction: column;
    gap: 5px;
    padding: 7px 15px 0 3px;
    background: linear-gradient(#2b2e34, #3b3f46);
    border-bottom: 1px solid #000;
}

.send-bars span {
    height: 5px;
    background: #0b0c0e;
}

.send-bars .half {
    background: linear-gradient(90deg, #6ba4c4 50%, #0b0c0e 50%);
}

.event-params {
    padding: 5px 9px 4px 7px;
    display: flex;
    flex-direction: column;
    gap: 5px;
    border-bottom: 1px solid #7d828c;
}

.event-params:last-child {
    border: 0;
}

/* Centre column */
.center {
    flex: 1;
    min-width: 0;
    display: flex;
    flex-direction: column;
}

.arrange {
    flex: none;
    display: grid;
    grid-template-columns: 210px 1fr 16px;
    grid-template-rows: 33px 26px 369px 17px;
}

.track-tools {
    display: flex;
    border-right: 1px solid #000;
    border-bottom: 1px solid #000;
    background: #abb0ba;
}

.track-tools .tool svg {
    width: 18px;
    height: 18px;
}

.tool.flag {
    color: #4b8099;
}

.ruler, .ed-ruler {
    width: 100%;
    height: 33px;
    background: linear-gradient(#96d7f8 5px, #142634 5px);
}

.ruler text, .ed-ruler text {
    font-size: 11px;
    font-weight: bold;
    fill: #fff;
}

.corner {
    background: linear-gradient(90deg, #a3a9b5, #c2c6d0);
    border-left: 1px solid #000;
    border-right: 1px solid #000;
    border-bottom: 1px solid #000;
}

.marker-head {
    display: flex;
    align-items: center;
    background: #a2a8ae;
    border-right: 1px solid #000;
    border-bottom: 1px solid #70757e;
}

.marker-head i {
    width: 11px;
    height: 100%;
    margin-right: 11px;
    background: #72767d;
}

.marker-head button {
    width: 22px;
    height: 14px;
    border: 1px solid #5f646c;
    font-size: 12px;
    line-height: 11px;
}

.marker-head b {
    flex: 1;
    padding-left: 6px;
    font-size: 11px;
}

.marker-head .note-btn {
    width: 30px;
    margin-right: 21px;
}

.note-btn svg {
    width: 28px;
    height: 11px;
}

.marker-lane {
    background: repeating-linear-gradient(90deg, #15191d 0 1px, transparent 1px 69.7px), #353c43;
    border-bottom: 1px solid #50565d;
}

.track-list, .lanes {
    overflow: hidden;
    position: relative;
    border-bottom: 1px solid #000;
}

.track-list {
    background: linear-gradient(90deg, transparent 199px, #453c34 199px);
    border-right: 1px solid #000;
}

.scrolled {
    margin-top: -8px;
}

.track {
    width: 200px;
    height: 31px;
    display: flex;
    align-items: center;
    background: #abb0ba;
    border-bottom: 1px solid #8c919b;
    border-right: 1px solid #000;
}

.track-color {
    width: 11px;
    height: 31px;
    border-right: 1px solid #000;
    display: flex;
    align-items: flex-end;
}

.track-color svg {
    width: 10px;
    height: 10px;
    border-top: 1px solid rgba(0, 0, 0, 0.5);
    color: rgba(0, 20, 60, 0.7);
}

.track-buttons {
    display: flex;
    margin: 0 7px 5px 6px;
    border: 1px solid #6b7079;
}

.track-buttons button {
    width: 14px;
    height: 13px;
    font-size: 10px;
    line-height: 12px;
    border-right: 1px solid #6b7079;
}

.track-buttons button:last-child {
    border: 0;
}

.track-buttons svg {
    width: 10px;
    height: 9px;
    margin: 0 auto;
}

.track b {
    flex: 1;
    font-size: 11px;
    padding-bottom: 5px;
}

.track > svg {
    width: 15px;
    height: 13px;
    margin: 0 8px 6px 0;
    color: #7f848d;
}

.track.audio > svg {
    color: #43474e;
}

.track.selected {
    background: #d8f2ff;
}

.track.selected > svg {
    color: #2e7596;
}

.track.selected .rec-btn {
    background: #c3100f;
    color: #400;
}

.track.selected .mon-btn {
    background: #3fa9c4;
}

.lanes {
    background: #2e333b;
}

.lane {
    height: 31px;
    position: relative;
    border-bottom: 1px solid #1e2227;
    background: repeating-linear-gradient(90deg, #0b0d10 0 1px, transparent 1px 69.7px);
}

.lane.selected {
    background: repeating-linear-gradient(90deg, #0b0d10 0 1px, transparent 1px 69.7px), #778e9b;
}

.clip {
    position: absolute;
    top: 3px;
    height: 27px;
    overflow: hidden;
    border-top: 1px solid rgba(255, 255, 255, 0.35);
}

.clip svg {
    position: absolute;
    left: 0;
    top: 0;
}

.clip span {
    position: absolute;
    left: 0;
    top: 0;
    height: 11px;
    padding: 0 4px 0 1px;
    font-size: 9px;
    line-height: 11px;
    white-space: nowrap;
    color: #fff;
    background: rgba(0, 0, 0, 0.4);
    border-bottom-right-radius: 2px;
}

.clip.picked {
    border: 2px solid #7fe4ff;
}

.vscroll {
    display: flex;
    flex-direction: column;
    align-items: center;
    background: #aeb3bd;
    border-left: 1px solid #000;
    border-right: 1px solid #000;
}

.vtrack {
    flex: 1;
    width: 11px;
    background: #5c6067;
    display: flex;
    flex-direction: column;
}

.vthumb {
    background: linear-gradient(90deg, #c0c4cc, #a2a6af);
    border-radius: 1px;
}

.vthumb.mid {
    height: 116px;
    margin-top: 54px;
}

.vthumb.low {
    height: 72px;
    margin-top: 75px;
}

.vscroll .up, .vscroll .down {
    width: 7px;
    height: 18px;
    background: #454a52;
    clip-path: polygon(50% 38%, 100% 62%, 0 62%);
}

.vscroll .down {
    clip-path: polygon(0 38%, 100% 38%, 50% 62%);
}

.track-foot, .hscroll {
    display: flex;
    align-items: center;
    background: #b1b6bf;
    border-bottom: 1px solid #000;
}

.track-foot {
    border-right: 1px solid #000;
}

.led {
    width: 51px;
    height: 16px;
    display: flex;
    align-items: center;
    justify-content: center;
    gap: 4px;
    font-size: 9px;
    border-right: 1px solid #747983;
}

.led i {
    width: 10px;
    height: 6px;
    border-radius: 2px;
    background: #4a4e55;
}

.track-foot b {
    flex: 1;
    text-align: center;
}

.track-foot svg {
    width: 10px;
    height: 10px;
    margin-right: 5px;
}

.arrange .hscroll {
    grid-column: 2 / 4;
}

.hscroll {
    border-right: 1px solid #000;
}

.hscroll .prev, .hscroll .next {
    width: 17px;
    height: 8px;
    background: #454a52;
    clip-path: polygon(60% 0, 60% 100%, 36% 50%);
}

.hscroll .next {
    clip-path: polygon(40% 0, 40% 100%, 64% 50%);
}

.htrack {
    flex: 1;
    height: 11px;
    background: #5c6067;
    display: flex;
}

.hthumb {
    background: linear-gradient(#c0c4cc, #a2a6af);
}

.hthumb.song {
    width: 36%;
    margin-left: 108px;
}

.hthumb.edit {
    width: 50px;
    margin-left: 276px;
}

.zoom {
    width: 105px;
    height: 100%;
    display: flex;
    align-items: center;
    gap: 5px;
    padding: 0 4px;
    border-left: 1px solid #000;
    border-right: 1px solid #000;
}

.zoom em {
    width: 7px;
    height: 4px;
    background: #3e4249;
}

.zoom em.big {
    width: 17px;
}

.zoom input {
    flex: 1;
    min-width: 0;
    height: 12px;
}

.zoom input[type="range"]::-webkit-slider-thumb {
    height: 12px;
}

.fit {
    width: 16px;
    height: 10px;
    margin: 0 2px;
}

.divider {
    height: 9px;
    flex: none;
    background: #a7acb6;
}

/* Editor toolbar */
.editor-tools {
    height: 35px;
    flex: none;
    display: flex;
    align-items: center;
    background: linear-gradient(#c3c6ce, #a4a8b1);
    border-top: 1px solid #000;
    border-bottom: 1px solid #000;
    border-right: 1px solid #000;
}

.editor-tools .tool-field {
    gap: 1px;
}

.et-left {
    width: 110px;
    display: flex;
    justify-content: flex-end;
    border-right: 1px solid #fff;
}

.swap.tool {
    width: 17px;
}

.swap.tool svg {
    width: 14px;
    height: 16px;
}

.et-blank {
    width: 48px;
    height: 33px;
    border-right: 1px solid #686d76;
}

.et-group {
    display: flex;
    height: 33px;
    border-right: 1px solid #686d76;
}

.et-blank.short {
    width: 32px;
}

.edit-set {
    width: 195px;
    padding-left: 1px;
}

.aktion {
    width: 76px;
    height: 33px;
    margin-right: 10px;
    display: flex;
    align-items: center;
    justify-content: center;
    gap: 8px;
    font-size: 11px;
    font-weight: bold;
    border-right: 1px solid #686d76;
}

.pane-buttons {
    display: flex;
    margin-left: auto;
    margin-right: 7px;
    align-self: flex-start;
    padding-top: 3px;
}

.pane-buttons button {
    width: 28px;
    height: 15px;
    display: flex;
    align-items: center;
    justify-content: center;
    background: #1e2023;
    border: 1px solid #000;
}

/* Piano editor */
.editor {
    flex: 1;
    display: flex;
    min-height: 0;
}

.ed-panel {
    width: 158px;
    flex: none;
    border-right: 1px solid #000;
}

.ed-head {
    padding-right: 3px;
}

.ed-head .color-chip {
    width: 16px;
    margin-right: 14px;
}

.ed-panel .param label,
.instr-row,
.instr-box > label {
    padding-left: 2px;
}

.scale-box {
    height: 90px;
    padding: 8px 6px 0 7px;
    border-bottom: 1px solid #7d828c;
}

.scale-row {
    display: flex;
    gap: 6px;
    padding: 6px 0;
}

.scale-row .root {
    width: 24px;
}

.scale-row .kind {
    flex: 1;
}

.scale-keys {
    width: 144px;
    height: 29px;
}

.instr-box {
    height: 86px;
    padding: 9px 6px 0 7px;
    border-bottom: 1px solid #7d828c;
}

.instr-row {
    display: flex;
    align-items: center;
    height: 16px;
    margin-bottom: 6px;
}

.instr-row svg {
    width: 14px;
    height: 11px;
    color: #7f848d;
}

.ms {
    display: flex;
    margin: 0 12px 0 11px;
}

.ms button {
    width: 20px;
    height: 15px;
    border: 1px solid #767b84;
}

.instr-box > label {
    display: block;
}

input.velocity {
    display: block;
    width: 144px;
    height: 12px;
    margin: 3px 0 9px;
    background: linear-gradient(90deg, #3e4249 117px, #9a9fa9 117px);
}

.velocity::-webkit-slider-thumb {
    opacity: 0;
}

.no-event {
    padding: 11px 0 10px;
    text-align: center;
    border-bottom: 1px solid #7d828c;
}

.key-col {
    width: 72px;
    flex: none;
    display: flex;
    flex-direction: column;
}

.key-tabs {
    height: 33px;
    display: flex;
    align-items: flex-end;
    border-bottom: 1px solid #000;
    border-right: 8px solid #142634;
    background: #abb0ba;
}

.key-tabs button, .curve-tabs button {
    width: 20px;
    height: 15px;
    display: flex;
    align-items: center;
    justify-content: center;
    border-right: 1px solid #6f747d;
}

.key-tabs button {
    width: 19px;
}

.key-tabs .on, .curve-tabs .on {
    background: #8fd0f2;
}

.key-tabs svg, .curve-tabs svg {
    width: 14px;
    height: 12px;
    color: #24567a;
}

.keyboard {
    width: 72px;
    height: 290px;
}

.key-foot {
    height: 18px;
    background: #a9aeba;
    border-top: 1px solid #000;
    border-bottom: 1px solid #000;
}

.auto-scale {
    width: 72px;
    height: 97px;
}

.auto-scale text {
    font-size: 9px;
    fill: #8b8b8b;
    text-anchor: end;
}

.curve-tabs {
    height: 18px;
    display: flex;
    align-items: center;
    border-top: 1px solid #000;
    background: #a3b3bd;
}

.ed-main {
    flex: 1;
    min-width: 0;
    display: flex;
    flex-direction: column;
}

.ed-scrollarea {
    display: flex;
}

.ed-canvas {
    flex: 1;
    min-width: 0;
}

.ed-vscroll {
    width: 16px;
    display: flex;
    flex-direction: column;
}

.ed-vscroll .corner {
    height: 33px;
}

.ed-vscroll .vscroll {
    flex: 1;
}

.roll {
    width: 100%;
    height: 290px;
    background: #fdfdfd;
}

.lane-tabs {
    height: 18px;
    margin-left: -8px;
    display: flex;
    background: linear-gradient(#bcc0cb, #a9aeb8);
    border-top: 1px solid #000;
    border-bottom: 1px solid #000;
    border-right: 1px solid #000;
}

.lane-tabs button {
    padding: 0 7px;
    border-right: 1px solid #747983;
}

.lane-tabs .dots {
    width: 20px;
    padding: 0;
    border-left: 1px solid #747983;
}

.lane-tabs .on {
    background: #62b4ea;
}

.auto-lane {
    width: 100%;
    height: 97px;
    background: #fdfdfd;
}

.ed-main .hscroll {
    height: 18px;
    margin-left: -8px;
    border-top: 2px solid #000;
    border-left: 1px solid #000;
}

.end {
    width: 16px;
    height: 100%;
    border-left: 1px solid #000;
    background: #b9bdc8;
}

.splitter {
    width: 9px;
    flex: none;
    background: linear-gradient(90deg, #8d949f, #b4bbc6 3px, #a9b0ba);
    display: flex;
    align-items: center;
    justify-content: center;
}

.splitter i {
    width: 6px;
    height: 46px;
    margin-bottom: 56px;
    background: radial-gradient(circle, #555a62 0.8px, transparent 1px) 0 0 / 3px 3px;
}

/* Browser */
.browser {
    width: 241px;
    flex: none;
    display: flex;
    flex-direction: column;
    overflow: hidden;
    background: #22262e;
    color: #c3c6cb;
    border-bottom: 1px solid #000;
}

.places {
    flex: 1;
    list-style: none;
    padding-top: 36px;
}

.places li {
    height: 55px;
    display: flex;
    gap: 22px;
    padding-left: 21px;
    font-size: 11px;
}

.places p {
    line-height: 18px;
    white-space: nowrap;
}

.places h3 {
    line-height: 18px;
    padding-left: 3px;
    color: #fff;
}

.places svg {
    width: 32px;
    height: 32px;
}

.fx {
    font-size: 17px;
    font-weight: bold;
    text-anchor: middle;
    fill: #edf2f6;
}

.browser-actions {
    display: flex;
    flex-direction: column;
    gap: 9px;
    padding: 0 30px 20px 32px;
}

.browser-actions button {
    height: 22px;
    border-radius: 2px;
    background: linear-gradient(#e6e8ed, #b1b4bc);
    font-size: 11px;
    color: #111;
}

.browser-tabs {
    height: 21px;
    display: flex;
    align-items: center;
    background: linear-gradient(#42474f, #555a62);
}

.browser-tabs button {
    height: 21px;
    padding: 0 7px;
    border-right: 1px solid #2b2e33;
    font-size: 11px;
}

.browser-tabs .home {
    width: 23px;
    padding: 0 5px;
    background: #5b9abf;
    color: #15314a;
}

.home svg {
    width: 12px;
    height: 13px;
}

.browser-tabs .t-s {
    border: 0;
    padding-right: 5px;
}

.browser-tabs .clip-tab {
    width: 29px;
    padding: 0;
    display: flex;
    align-items: center;
    justify-content: center;
    overflow: hidden;
    border: 0;
}

.browser-tabs .caret {
    margin-left: 3px;
}

/* Transport */
.transport {
    height: 50px;
    flex: none;
    display: flex;
    border-top: 1px solid #000;
    border-bottom: 2px solid #3d454a;
    background: linear-gradient(#b9bcc3, #878b93);
}

.tr-left {
    width: 191px;
    border-right: 1px solid #73777f;
    background: linear-gradient(90deg, transparent 180px, rgba(0, 0, 0, 0.2));
}

.tr-frame {
    flex: 1;
    display: flex;
    padding: 5px 7px 5px 6px;
    background: linear-gradient(#c3c6cc, #8b8f96);
}

.tr-right {
    width: 353px;
    border-left: 1px solid #73777f;
    display: flex;
    justify-content: flex-end;
    padding: 8px 9px 6px;
}

.tr-panel {
    flex: 1;
    display: flex;
    align-items: center;
    padding-left: 36px;
    background: linear-gradient(#1f2327, #0c0e10 60%, #07090a);
    border: 1px solid #000;
    color: #e0e2e4;
}

.cell {
    display: flex;
    flex-direction: column;
    align-items: center;
    font-size: 12px;
    line-height: 15px;
}

.cell small {
    font-size: 9px;
    line-height: 12px;
    white-space: nowrap;
}

.cell b {
    white-space: nowrap;
}

.cell .t13 {
    font-size: 13px;
}

.cell .t22 {
    font-size: 22px;
    line-height: 20px;
}

.midi {
    width: 43px;
}

.midi svg {
    width: 28px;
    height: 16px;
}

.perf {
    width: 59px;
    gap: 4px;
    margin: 0 8px 0 0;
    padding-top: 4px;
    align-items: stretch;
    text-align: center;
}

.load {
    height: 4px;
    background: linear-gradient(90deg, #5ea9dd 18px, #34383d 18px);
}

.spin {
    width: 20px;
    height: 20px;
}

.c-rate {
    width: 62px;
    margin-left: 3px;
}

.c-rec {
    width: 88px;
}

.c-sec {
    width: 100px;
    margin-left: 8px;
}

.c-pos {
    width: 150px;
    margin-left: 20px;
}

.tr-btns {
    display: flex;
    gap: 2px;
    margin-left: 11px;
}

.tr-btns.small {
    gap: 3px;
    margin-left: 9px;
}

.tr-btns button {
    width: 32px;
    height: 31px;
    display: flex;
    align-items: center;
    justify-content: center;
    background: #1c2024;
}

.tr-btns.small button {
    width: 23px;
    height: 26px;
}

.tr-btns.small .rtz {
    margin-left: 2px;
}

.tr-btns .loop-btn {
    width: 40px;
}

.tr-btns svg {
    width: 18px;
    height: 18px;
    fill: #74818c;
}

.tr-btns .stop svg {
    fill: #27b8e8;
}

.tr-btns svg.loop {
    width: 22px;
    fill: none;
    stroke: #74818c;
    stroke-width: 3;
}

.lr {
    width: 16px;
    margin: 0 17px 0 11px;
    display: flex;
    flex-direction: column;
    gap: 2px;
    font-size: 9px;
    text-align: center;
    color: #5e646a;
}

.lr span {
    background: #181b1e;
}

.c-pre {
    margin: 0 8px;
    gap: 4px;
}

.c-pre svg {
    width: 16px;
    height: 12px;
}

.c-metro {
    width: 48px;
}

.c-metro span {
    display: flex;
    gap: 8px;
    height: 15px;
    color: #8b9096;
}

.c-metro svg {
    width: 12px;
    height: 13px;
}

.c-sig {
    width: 60px;
}

.c-tempo {
    width: 52px;
}

.c-level {
    width: 84px;
    margin-left: 10px;
    gap: 2px;
    align-items: stretch;
}

.c-level i {
    height: 4px;
    background: linear-gradient(90deg, #383b3f 67px, #411518 67px);
}

.c-level u {
    height: 9px;
    margin-top: 4px;
    background: linear-gradient(90deg, transparent 50px, rgba(10, 12, 14, 0.7) 50px), repeating-linear-gradient(90deg, #4ca6dc 0 2px, #101418 2px 3px);
    width: 68px;
}

.stereo {
    width: 14px;
    height: 10px;
    margin: 15px 0 0 -14px;
}

.tr-wrench {
    width: 7px;
    height: 7px;
    margin: 0 10px 20px auto;
    color: #b5b8bc;
}

.views {
    display: flex;
}

.views button {
    height: 32px;
    width: 45px;
    font-size: 11px;
    font-weight: bold;
    color: #2b3036;
    background: #aeb1b8;
}

.views .v-browse {
    width: 59px;
}

.views .on {
    color: #1d5878;
    background: linear-gradient(#8bd4fb, #a9ecff 50%, #8ad2fb);
}

/* Context menu */
.context-menu {
    position: absolute;
    left: 786px;
    top: 461px;
    width: 390px;
    padding: 1px 2px;
    display: flex;
    flex-direction: column;
    font-family: "Open Sans", "Noto Sans", sans-serif;
    font-size: 11px;
    color: #000;
    background: #e8ebf3;
    border: 1px solid #a3a7ae;
    box-shadow: 2px 2px 3px rgba(0, 0, 0, 0.45);
}

.context-menu.sub {
    left: 1172px;
    top: 799px;
    width: 305px;
}

.cm-head {
    height: 42px;
    display: flex;
    background: #d3dae3;
}

.cm-chip {
    width: 24px;
    background: #0048ff;
}

.cm-head div {
    padding: 0 3px;
    line-height: 18px;
}

.cm-head p {
    padding-left: 2px;
}

.cm-head b {
    display: block;
    line-height: 22px;
}

.cm-head em {
    font-style: normal;
    color: #2c3a94;
    margin: 0 25px;
}

.cm-head em:last-child {
    margin: 0 23px 0 21px;
}

.context-menu button {
    height: 22px;
    display: flex;
    align-items: center;
    padding-left: 27px;
    text-align: left;
    position: relative;
    white-space: nowrap;
}

.context-menu .tall {
    height: 24px;
}

.context-menu svg {
    position: absolute;
    left: 4px;
    width: 16px;
    height: 16px;
    color: #33373d;
}

.context-menu svg.wide {
    left: 2px;
    width: 20px;
    height: 14px;
}

.context-menu kbd {
    position: absolute;
    left: 299px;
    font: inherit;
}

.context-menu.sub kbd {
    left: 244px;
}

.context-menu hr {
    width: calc(100% - 27px);
    height: 1px;
    margin: 1px 0 1px 27px;
    border: 0;
    background: #d3dae3;
}

.context-menu h4 {
    height: 18px;
    line-height: 18px;
    margin-left: 26px;
    padding-left: 1px;
    background: #d3dae3;
}

.context-menu .group {
    height: 40px;
    line-height: 20px;
}

.context-menu .group b {
    display: block;
}

.context-menu .group::after {
    content: "";
    position: absolute;
    right: 4px;
    border: 4px solid transparent;
    border-left-color: #000;
    border-right: 0;
}

.context-menu .hot {
    background: linear-gradient(#b4e1ef, #9dd7ea);
    box-shadow: inset 0 0 0 1px #82bfd6;
}

.marks {
    position: absolute;
    left: 0;
    top: 0;
    pointer-events: none;
}
```
FILE: script.js
```
const BAR = 17.42;      // song pixels per bar
const FIRST_BAR = 13;
const ED_BAR = 208;     // editor pixels per bar

const keys = 'keys', wave = 'wave';

// name, color, icon, clip label, pattern, clips [from, to, hide label]
const tracks = [
    ['Vocals ending', '#0048ff', wave, '', '', []],
    ['Rhodes', '#b3686a', wave, 'Rhodes', 'audio', [[13, 17, 1], [17, 18.95], [18.95, 25], [49, 73], [73, 77], [81.3, 87]]],
    ['Studio Grand', '#172c6e', keys, 'Studio Grand', 'grand', [[13, 25, 1], [33, 49], [57, 87]]],
    ['Saw Synth', '#6c87ae', keys, 'Saw Synth', 'saw', [[13, 17, 1], [17, 25], [33, 41], [41, 49], [57, 65], [65, 73], [73, 81], [81, 87]]],
    ['Clean Lead', '#84a5d6', keys, 'Studio Grand', 'lead', [[33, 49], [57, 73], [73, 81], [81, 87]]],
    ['Synthpad', '#6780a8', keys, 'Synthpad', 'pad', [[13, 17, 1], [49, 57], [57, 73], [81, 87]]],
    ['Deep Bass', '#94c4ff', keys, 'Deep Bass', 'bass', [[17, 25], [25, 33], [33, 41], [41, 49], [49, 57], [57, 65], [65, 73], [79.35, 87]]],
    ['Arp Bass', '#0040ff', keys, 'Arp Bass', 'arp', [[25, 33], [33, 41], [41, 49], [49, 57], [57, 65], [65, 73], [73, 81], [81, 87]]],
    ['Legato Strings', '#3c94ff', keys, 'Legato Strings', 'legato', [[17, 24.9], [49, 57.4]]],
    ['Section Strings', '#0048ff', keys, 'Section Strings', 'section', [[33, 49], [56.4, 81.4]]],
    ['Soft Ice Pad', '#0048ff', keys, 'Soft Ice Pad', 'ice', [[33, 41], [41, 49], [57, 65], [65, 73], [81, 87]]],
    ['Clean Gate', '#0018c8', keys, 'Clean Gate', 'ice', [[57, 65], [65, 73]]],
    ['', '#0b0b60', keys, '', '', [[17, 25, 1], [33, 49, 1], [57, 73, 1], [81, 87, 1]]]
];

const clipColor = { 'Saw Synth': '#b28fff', 'Rhodes': '#a76a6b', 'Studio Grand': '#162c70' };

function barX(bar) {
    return (bar - FIRST_BAR) * BAR;
}

function stroke(d, color, extra) {
    return '<path d="' + d + '" fill="none" stroke="' + color + '" ' + (extra || '') + '/>';
}

function noise(n) {
    const v = Math.sin(n * 12.9898) * 43758.5453;
    return v - Math.floor(v);
}

// two waveforms, louder towards the end of long clips
function audioPattern(w, from) {
    let d = '';
    for (let x = 0; x < w; x += 2) {
        const bar = from + x / BAR;
        let level = 1;
        if (bar > 52) level = 2;
        if (bar > 60) level = 3;
        if (bar > 65 && bar < 73) level = 5;
        if (bar > 73 && bar < 80) level = 0.6;
        if (bar > 80) level = 6;
        const swell = 0.5 + 0.5 * Math.abs(Math.sin(bar * 1.6));
        const a = 0.5 + level * (0.4 + 0.6 * noise(from + x)) * swell;
        d += 'M' + x + ' ' + (5 - a) + 'v' + 2 * a + 'M' + x + ' ' + (18 - a) + 'v' + 2 * a;
    }
    return stroke('M0 5.500H' + w + 'M0 18.500H' + w, '#5a1c1e') + stroke(d, '#5a1c1e', 'stroke-width="2"');
}

// melody line with short rises over a held lower voice
function phrasePattern(w, color, y) {
    let d = '';
    const top = ['h6l2 1h5', 'l3-1h5l3 1h2', 'h4l2 1h8', 'l4-1h4l2 1h5'];
    for (let x = 0, i = 0; x < w; x += BAR, i++) {
        const px = Math.round(x);
        d += 'M' + px + ' ' + (y + 4.5 + (i % 4 === 1 ? 2 : 0)) + 'h14';
        d += 'M' + (px + 1) + ' ' + (y + 0.5) + top[i % 4];
    }
    return stroke(d, color);
}

function clipPattern(kind, w, from) {
    let d = '';
    if (kind === 'audio') return audioPattern(w, from);
    if (kind === 'grand') return phrasePattern(w, '#b9c8ef', 9);
    if (kind === 'saw') return phrasePattern(w, '#4d3a86', 9);
    if (kind === 'lead') return phrasePattern(w, '#31517f', 10);
    if (kind === 'pad') {
        for (let x = 0, i = 0; x < w; x += BAR, i++) d += 'M' + x + ' ' + [14, 14, 15, 12][i % 4] + 'h' + (BAR - 1);
        return stroke(d, '#ced4de', 'stroke-width="2"') + stroke('M17 14h15M52 15h32', '#ced4de', 'stroke-width="4"');
    }
    if (kind === 'bass') {
        return stroke('M0 15.500h14l4 1h15l3-2h30l4-1 4 1h14l22 3h30', '#16335c', from === 25 || from === 49 ? 'stroke-dasharray="7 10"' : '')
            + stroke('M139 15.500h14l4 1h15l3-2h30', '#16335c');
    }
    if (kind === 'arp') {
        return stroke('M0 14.500h30l5-1h32l5 2h16l6 1 6 3h40', '#c4d4ff', 'stroke-dasharray="1 1"')
            + stroke('M0 18.500h34M60 16.500h28M98 16.500h40', '#c4d4ff', 'stroke-dasharray="1 1"');
    }
    if (kind === 'legato') return stroke('M0 17.500h12l10-2h20l8 2h30l12-2h42M0 22.500h134M38 22q4-7 12-5v5M60 22v-5M65 22v-5M76 22v-5h6v5M96 22v-5l4 5M110 22q6-6 22-5v5', '#1c4e93');
    if (kind === 'section' && from < 50) return stroke('M0 17h17M18 17h50M69 17h34M104 17h33M139 17h50M190 17h80', '#c9d7ff', 'stroke-width="3"') + stroke('M0 21.500h64M66 22.500h204', '#c9d7ff');
    if (kind === 'section') return stroke('M0 14.500h26l8 1h16l10-2h12l8 1h16l20-2h34l6 1h22l10 2h20l16-2 20-1h30M280 11.500h30l10 1h20l10-1h50l10 1h30', '#9fbcff') + stroke('M100 22h90M220 22h30q6-8 16-6l4 6M150 20l6-2 6 2', '#123a9c');
    if (kind === 'ice') return stroke('M35 14.500h34M70 12.500h16M87 13.500h17M104 15.500h35', '#b9cbff', 'stroke-width="2"') + stroke('M70 15.500h34', '#b9cbff');
    return '';
}

function buildTracks() {
    let heads = '', lanes = '';
    tracks.forEach(function (t) {
        const [name, color, icon, label, kind, clips] = t;
        const sel = name === 'Soft Ice Pad' ? ' selected' : '';
        heads += '<div class="track' + sel + (icon === wave ? ' audio' : '') + '">' +
            '<span class="track-color" style="background:' + color + '"><svg><use href="#i-curve"/></svg></span>';
        if (name) {
            heads += '<span class="track-buttons"><button>m</button><button>S</button><button class="rec-btn">●</button>' +
                '<button class="mon-btn" aria-label="Monitor"><svg><use href="#i-speaker"/></svg></button></span>' +
                '<b>' + name + '</b><svg><use href="#i-' + icon + '"/></svg>';
        }
        heads += '</div>';
        lanes += '<div class="lane' + sel + '">';
        clips.forEach(function (c, i) {
            const w = (c[1] - c[0]) * BAR - 1.5;
            const picked = sel && i === 0;
            let bg = clipColor[name] || color;
            if (picked) bg = '#1f7dff';
            let art = clipPattern(kind, w, c[0]);
            if (picked) art = stroke('M2 14v10M4 15h8v4h6v-5h5v6h8v-4l6 2 8-3M60 8h40', '#6f9cc4');
            if (kind === 'audio' && c[1] === 25) art += '<path d="M70 0h40v28z" fill="#d09a98" opacity=".5"/><path d="M70 0l36 27" stroke="#6e4142"/>';
            lanes += '<div class="clip' + (picked ? ' picked' : '') + '" style="left:' + barX(c[0]).toFixed(1) + 'px;width:' + w.toFixed(1) + 'px;background-color:' + bg + '">' +
                '<svg width="' + Math.ceil(w) + '" height="27">' + art + '</svg>' + (c[2] ? '' : '<span>' + label + '</span>') + '</div>';
        });
        lanes += '</div>';
    });
    document.getElementById('trackList').innerHTML = heads;
    document.getElementById('lanes').innerHTML = lanes;
}

function buildSongRuler() {
    let s = '';
    for (let bar = FIRST_BAR; bar <= 85; bar += 4) {
        const x = Math.round(barX(bar));
        s += '<path d="M' + (x + 0.5) + ' 29v4" stroke="#fff"/><text x="' + (x + 2) + '" y="18">' + bar + '</text>';
    }
    document.getElementById('songRuler').innerHTML = s;
}

// vertical beat lines shared by the roll and the automation lane
function beatLines(h) {
    let s = '';
    for (let i = 0; i < 100; i++) {
        const color = i % 16 === 0 ? '#5d5d5d' : i % 4 === 0 ? '#777' : '#bcbcbc';
        s += stroke('M' + (i * 13 + 0.5) + ' 0v' + h, color);
    }
    return s;
}

const C4 = 145;     // top of the C4 row
const ROW = 8;
const isBlack = s => [1, 3, 6, 8, 10].includes(((s % 12) + 12) % 12);

function buildRoll() {
    let rows = '', board = '<defs><linearGradient id="kw"><stop stop-color="#a9acb0"/><stop offset=".3" stop-color="#eceef0"/><stop offset="1" stop-color="#fff"/></linearGradient></defs><rect width="63" height="290" fill="url(#kw)"/>';
    for (let s = 18; s >= -18; s--) {
        const y = C4 - s * ROW;
        const deg = ((s % 12) + 12) % 12;
        if (isBlack(s)) {
            rows += '<rect y="' + y + '" width="100%" height="8" fill="#d2d4d8"/>';
            board += stroke('M40 ' + (y + 4.5) + 'h23', '#8f9296') +
                '<rect y="' + y + '" width="40" height="8" fill="#111416"/><path d="M0 ' + (y + 2) + 'h34l3 2-3 2H0z" fill="#3a3e42"/>';
        }
        if (deg === 5 || deg === 0) {
            rows += stroke('M0 ' + (y + 8.5) + 'h1300', deg ? '#c2c4c8' : '#85878b');
            board += stroke('M0 ' + (y + 8.5) + 'h63', '#9a9da1');
        }
        if (deg === 0) board += '<text x="49" y="' + (y + 9) + '" font-size="9" fill="#222">C ' + (4 + s / 12) + '</text>';
    }
    board += '<rect x="63" width="9" height="290" fill="#43484d"/>' + stroke('M63.500 0v290M71.500 0v290', '#000');

    // semitones above C4, start, end (editor pixels)
    const notes = [
        [7, -1, 197], [4, -1, 200], [0, -1, 201],
        [9, 208, 400], [4, 208, 400], [0, 208, 400],
        [7, 625, 816], [4, 625, 821], [-1, 625, 822],
        [4, 833, 1034], [0, 833, 1035], [-5, 833, 1030],
        [4, 1041, 1236], [0, 1041, 1236], [-3, 1041, 1235],
        [-1, 1249, 1300], [-5, 1249, 1300], [-8, 1249, 1300]
    ];
    const bars = notes.map(n => '<rect x="' + (n[1] + 0.5) + '" y="' + (C4 - n[0] * ROW + 0.5) + '" width="' + (n[2] - n[1]) + '" height="7" fill="#4c6092" stroke="#0a1430"/>').join('');
    document.getElementById('roll').innerHTML = rows + beatLines(290) + bars;
    document.getElementById('keyboard').innerHTML = board;

    let ruler = '';
    for (let i = 0; i < 100; i++) ruler += stroke('M' + (i * 13 + 0.5) + ' ' + (i % 4 ? 30 : 27) + 'v6', '#dfe5ea');
    for (let b = 0; b < 7; b++) ruler += '<text x="' + (b * ED_BAR + 2) + '" y="18">' + (33 + b) + '</text>';
    document.getElementById('edRuler').innerHTML = ruler;
}

function buildAutomation() {
    const pts = [[73, 92], [73, 43], [79, 45], [92, 46], [103, 45], [147, 23], [148, 27], [150, 47], [151, 64], [155, 66], [161, 56], [168, 40],
        [180, 18], [185, 11], [186, 23], [192, 25], [195, 23], [206, 13], [211, 9], [213, 22], [215, 32], [215, 56], [216, 75], [221, 74],
        [242, 41], [254, 28], [263, 22], [266, 25], [270, 51], [277, 68], [282, 78], [288, 75], [295, 66], [299, 59], [302, 71], [302, 75],
        [315, 76], [386, 45], [389, 45], [391, 57], [394, 69], [407, 52], [416, 30], [428, 5], [433, 5], [433, 38], [436, 50], [443, 67],
        [452, 74], [473, 51], [482, 5], [492, 5], [501, 6], [511, 29], [516, 35], [527, 41], [539, 37], [571, 8], [574, 8], [585, 34],
        [596, 50], [607, 59], [620, 63], [675, 64], [688, 67], [707, 74], [717, 74], [736, 67], [794, 40], [823, 27], [828, 36], [837, 52],
        [854, 77], [856, 77], [856, 47], [886, 59], [915, 62], [1004, 62], [1066, 48], [1088, 36], [1093, 34], [1101, 35], [1113, 42],
        [1132, 45], [1146, 45], [1172, 30], [1186, 14], [1191, 8], [1191, 39], [1193, 51], [1195, 58], [1224, 75], [1233, 82], [1250, 92]];
    const line = 'M0 92L' + pts.map(p => p.join(' ')).join('L') + 'H1290';
    const dots = pts.map(p => '<circle cx="' + p[0] + '" cy="' + p[1] + '" r="2.200" fill="#0c1650"/>').join('');
    document.getElementById('autoLane').innerHTML = beatLines(97) + stroke(line, '#4d6199', 'stroke-width="1.500"') + dots;

    let scale = '<rect width="64" height="97" fill="#fdfdfd"/>';
    for (let y = 4; y < 97; y += 4) scale += stroke('M60 ' + (y + 0.5) + 'h4', '#444');
    scale += stroke('M58 48.500h6', '#000') + '<text x="53" y="8">127</text><text x="53" y="52">64</text><text x="53" y="96">0</text>' +
        '<rect x="63" width="9" height="97" fill="#43484d"/>' + stroke('M63.500 0v97M71.500 0v97', '#000');
    document.getElementById('autoScale').innerHTML = scale;
}

function buildSmallArt() {
    let k = '<rect x=".5" y=".5" width="143" height="28" fill="#fff" stroke="#000"/><rect x="1" y="25" width="142" height="3" fill="#45aef0"/>';
    [18, 42, 60, 78, 102, 126].forEach(x => k += stroke('M' + (x + 0.5) + ' 1v27', '#000'));
    [12, 36, 72, 96, 120].forEach(x => k += '<rect x="' + x + '" width="12" height="21" fill="#000"/><rect x="' + (x + 1) + '" y="17" width="10" height="3" fill="#45aef0"/>');
    document.getElementById('scaleKeys').innerHTML = k;

    let g = '';
    [0, 8, 14, 18, 21, 34, 42, 48, 52, 55, 68, 76, 82, 86, 90].forEach(x => g += stroke('M' + (x + 0.5) + ' 0v72', '#24495c'));
    [12, 24, 36, 48, 60].forEach(y => g += stroke('M0 ' + (y - 0.5) + 'h108', '#27566c'));
    g += stroke('M1 35H34C45 34 60 28 70 26Q73 26 75 42Q77 24 82 22Q90 20 107 20', '#e8f0f4', 'stroke-width="1.200"');
    document.getElementById('eqGraph').innerHTML = g;
}

buildTracks();
buildSongRuler();
buildRoll();
buildAutomation();
buildSmallArt();
```
